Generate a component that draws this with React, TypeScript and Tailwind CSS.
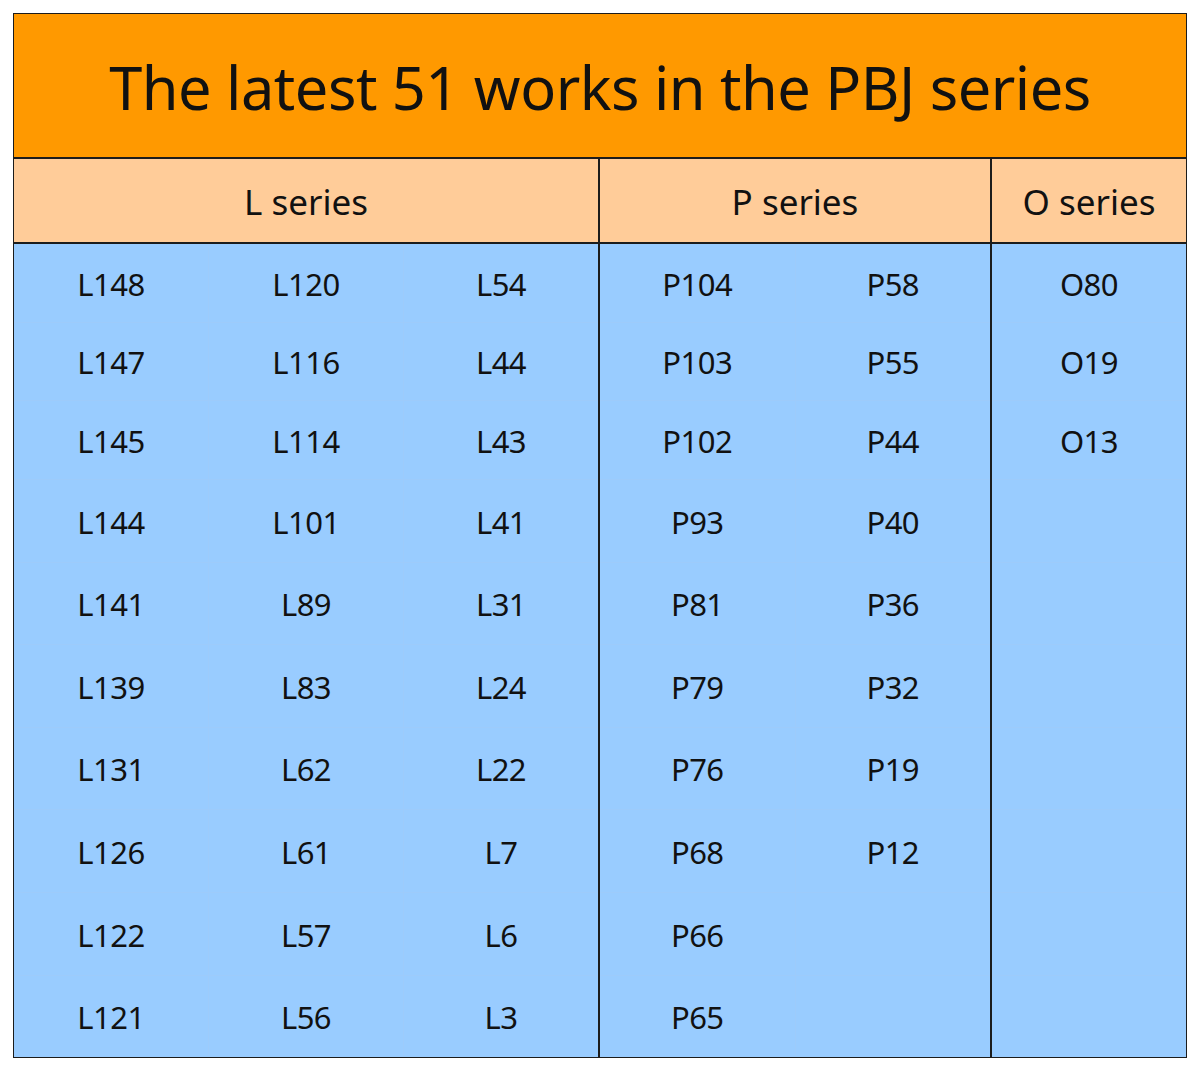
import React from "react";

const L = [
  ["L148", "L120", "L54"],
  ["L147", "L116", "L44"],
  ["L145", "L114", "L43"],
  ["L144", "L101", "L41"],
  ["L141", "L89", "L31"],
  ["L139", "L83", "L24"],
  ["L131", "L62", "L22"],
  ["L126", "L61", "L7"],
  ["L122", "L57", "L6"],
  ["L121", "L56", "L3"],
];
const P = [
  ["P104", "P58"],
  ["P103", "P55"],
  ["P102", "P44"],
  ["P93", "P40"],
  ["P81", "P36"],
  ["P79", "P32"],
  ["P76", "P19"],
  ["P68", "P12"],
  ["P66", ""],
  ["P65", ""],
];
const O = [["O80"], ["O19"], ["O13"], [""], [""], [""], [""], [""], [""], [""]];

const rowCls = [
  "h-[79px]",
  "h-[78px]",
  "h-[79px]",
  "h-[83px]",
  "h-[82px]",
  "h-[83px]",
  "h-[82px]",
  "h-[83px]",
  "h-[83px]",
  "h-[81px]",
];

function Section({ rows, cols, cls }: { rows: string[][]; cols: number; cls: string }) {
  return (
    <div className={cls}>
      {rows.map((r, i) => (
        <div key={i} className={`flex ${rowCls[i]} ${i < rows.length - 1 ? "border-b border-[#9dcbfb]" : ""}`}>
          {r.map((c, j) => (
            <div
              key={j}
              className={`flex-1 flex items-center justify-center pt-[2px] ${j < cols - 1 ? "border-r border-[#9dcbfb]" : ""}`}
            >
              {c}
            </div>
          ))}
        </div>
      ))}
    </div>
  );
}

export default function App() {
  return (
    <div className="w-[1200px] h-[1072px] bg-white pt-[13px] pl-[13px]" style={{ fontFamily: '"Noto Sans", "Open Sans", sans-serif' }}>
      <div className="w-[1174px] border border-[#1c1c1c] text-[#111]">
        <div className="h-[145px] bg-[#ff9900] flex items-center justify-center border-b-2 border-[#1c1c1c]">
          <span className="text-[59.5px] leading-none tracking-[-0.5px] pt-[2px]">The latest 51 works in the PBJ series</span>
        </div>
        <div className="flex h-[85px] bg-[#ffcc99] border-b-2 border-[#1c1c1c] text-[35px]">
          <div className="w-[586px] border-r-2 border-[#1c1c1c] flex items-center justify-center pt-[3px]">L series</div>
          <div className="w-[392px] border-r-2 border-[#1c1c1c] flex items-center justify-center pt-[3px]">P series</div>
          <div className="flex-1 flex items-center justify-center pt-[3px]">O series</div>
        </div>
        <div className="flex bg-[#99ccff] text-[31px] tracking-[-0.5px]">
          <Section rows={L} cols={3} cls="w-[586px] border-r-2 border-[#1c1c1c]" />
          <Section rows={P} cols={2} cls="w-[392px] border-r-2 border-[#1c1c1c]" />
          <Section rows={O} cols={1} cls="flex-1" />
        </div>
      </div>
    </div>
  );
}
